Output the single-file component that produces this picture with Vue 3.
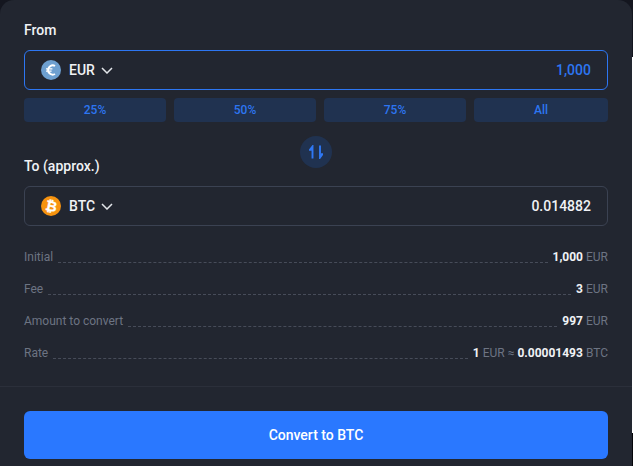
<script setup>
const pcts = ['25%', '50%', '75%', 'All']
const rows = [
  { label: 'Initial', parts: [['1,000', 1], ['EUR', 0]] },
  { label: 'Fee', parts: [['3', 1], ['EUR', 0]] },
  { label: 'Amount to convert', parts: [['997', 1], ['EUR', 0]] },
  { label: 'Rate', parts: [['1', 1], ['EUR ≈', 0], ['0.00001493', 1], ['BTC', 0]] },
]
</script>

<template>
  <div class="page">
    <main class="panel">
      <section class="form">
        <div class="label">From</div>
        <div class="field active">
          <svg class="coin" viewBox="0 0 20 20">
            <circle cx="10" cy="10" r="10" fill="#6ea0d0" />
            <path d="M14 6A4.7 4.7 0 0 0 7 10a4.7 4.7 0 0 0 7 4" fill="none" stroke="#fff" stroke-width="2" />
            <path d="M5 8.9h6.4M5 11.1h5.6" stroke="#fff" stroke-width="1.2" />
          </svg>
          <span class="cur">EUR</span>
          <svg class="chev" viewBox="0 0 12 7"><path d="M1 1l5 5 5-5" fill="none" stroke="#e3e6ea" stroke-width="1.5" /></svg>
          <span class="amount blue">1,000</span>
        </div>
        <div class="pcts">
          <button v-for="p in pcts" :key="p" class="pct">{{ p }}</button>
        </div>
        <div class="swap-row">
          <div class="swap">
            <svg viewBox="0 0 14 14" width="14" height="14">
              <path d="M3.5 13.5V1.5L.9 4.8H2.5" fill="none" stroke="#2f78f5" stroke-width="1.9" />
              <path d="M11 .5v12L13.4 9.2H12" fill="none" stroke="#2f78f5" stroke-width="1.9" />
            </svg>
          </div>
        </div>
        <div class="label to">To (approx.)</div>
        <div class="field">
          <svg class="coin" viewBox="0 0 20 20">
            <circle cx="10" cy="10" r="10" fill="#f7930f" />
            <text x="10.3" y="15" text-anchor="middle" class="btc" transform="rotate(12 10 10)">₿</text>
          </svg>
          <span class="cur">BTC</span>
          <svg class="chev" viewBox="0 0 12 7"><path d="M1 1l5 5 5-5" fill="none" stroke="#e3e6ea" stroke-width="1.5" /></svg>
          <span class="amount">0.014882</span>
        </div>
        <div class="rows">
          <div v-for="r in rows" :key="r.label" class="row">
            <span class="key">{{ r.label }}</span>
            <span class="dots"></span>
            <span class="val">
              <span v-for="(x, i) in r.parts" :key="i" :class="x[1] ? 'strong' : 'unit'">{{ x[0] }}</span>
            </span>
          </div>
        </div>
      </section>
      <footer class="foot">
        <button class="cta">Convert to BTC</button>
      </footer>
    </main>
  </div>
</template>

<style>
html, body { margin: 0; background: #14161f; overflow: hidden; }
</style>

<style scoped>
.page {
  width: 633px;
  height: 466px;
  font-family: Roboto, "Liberation Sans", sans-serif;
  overflow: hidden;
  background: linear-gradient(#14161f 57px, #fff 57px, #fff 433px, #05060a 433px);
}
.panel {
  width: 632px;
  height: 466px;
  background: #222630;
  border-radius: 14px 14px 0 0;
  display: flex;
  flex-direction: column;
}
.form { padding: 22px 24px 0; height: 386px; box-sizing: border-box; }
.label { font-size: 14px; line-height: 16px; font-weight: 500; color: #f0f2f5; }
.field {
  margin-top: 12px;
  height: 40px;
  box-sizing: border-box;
  border: 1px solid #3b4252;
  border-radius: 6px;
  display: flex;
  align-items: center;
  padding: 0 16px;
}
.field.active { border-color: #2d76f2; }
.coin { width: 20px; height: 20px; margin-right: 8px; }
.btc { font: 700 14px "DejaVu Sans", sans-serif; fill: #fff; stroke: #fff; stroke-width: 0.3px; }
.cur { font-size: 14px; font-weight: 500; color: #f0f2f5; }
.chev { width: 12px; height: 7px; margin-left: 6px; }
.amount { margin-left: auto; font-size: 14px; font-weight: 500; color: #f0f2f5; }
.amount.blue { color: #2d76f2; }
.pcts { margin-top: 8px; display: grid; grid-template-columns: 142px 142px 142px 134px; column-gap: 8px; }
.pct {
  height: 24px;
  padding: 0;
  border: 0;
  border-radius: 4px;
  background: #203250;
  color: #2d76f2;
  font: 500 12px Roboto, sans-serif;
}
.swap-row { display: flex; justify-content: center; margin-top: 14px; height: 32px; }
.swap {
  width: 32px;
  height: 32px;
  border-radius: 50%;
  background: #203250;
  display: flex;
  align-items: center;
  justify-content: center;
}
.label.to { margin-top: -10px; }
.rows { margin-top: 23px; display: flex; flex-direction: column; gap: 16px; }
.row { display: flex; align-items: flex-end; height: 16px; font-size: 12px; line-height: 16px; }
.key { color: #6d7483; }
.dots { flex: 1; border-bottom: 1px dashed #474c59; margin: 0 5px 2px; }
.val { display: flex; gap: 3px; }
.strong { font-weight: 700; color: #f0f2f5; }
.unit { color: #6d7483; }
.foot { border-top: 1px solid #2b2f3a; padding: 24px 24px 0; }
.cta {
  display: block;
  width: 584px;
  height: 48px;
  border: 0;
  border-radius: 6px;
  background: #2a78ff;
  color: #fff;
  font: 500 14px Roboto, sans-serif;
}
</style>
